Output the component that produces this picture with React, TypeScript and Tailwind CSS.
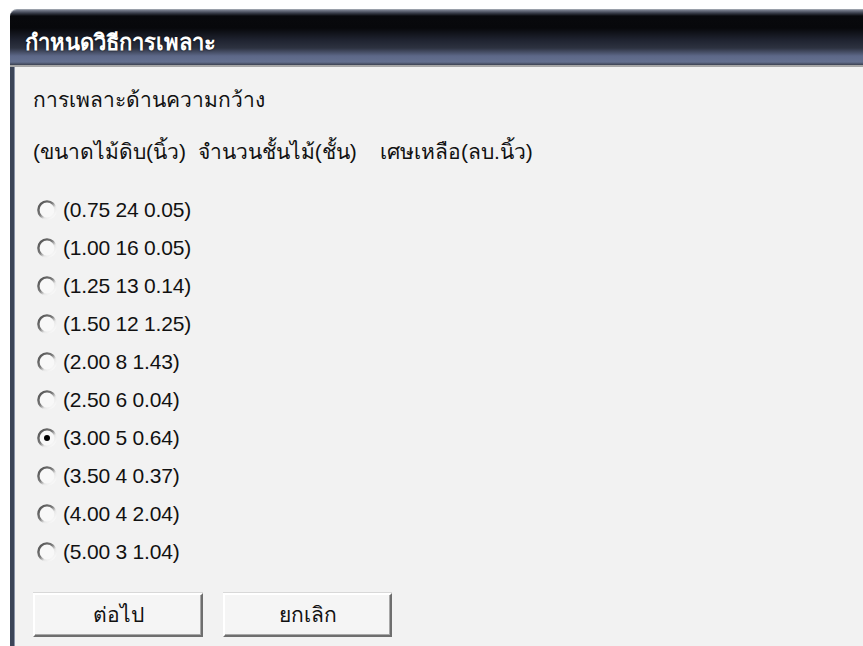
const options = [
  "(0.75 24 0.05)",
  "(1.00 16 0.05)",
  "(1.25 13 0.14)",
  "(1.50 12 1.25)",
  "(2.00 8 1.43)",
  "(2.50 6 0.04)",
  "(3.00 5 0.64)",
  "(3.50 4 0.37)",
  "(4.00 4 2.04)",
  "(5.00 3 1.04)",
];

const Radio = ({ checked }: { checked: boolean }) => (
  <svg width="20" height="20" viewBox="0 0 20 20" className="shrink-0">
    <defs>
      <linearGradient id="ring" x1="0" y1="0" x2="1" y2="1">
        <stop offset="0" stopColor="#4e4e4e" />
        <stop offset="0.45" stopColor="#7a7a7a" />
        <stop offset="0.65" stopColor="#e8e8e8" />
        <stop offset="1" stopColor="#ffffff" />
      </linearGradient>
    </defs>
    <circle cx="10" cy="10" r="8.6" fill="#f8f8f8" stroke="url(#ring)" strokeWidth="2.4" />
    {checked && <circle cx="10" cy="10" r="3" fill="#000" />}
  </svg>
);

const App = () => {
  const selected = 6;
  const font = { fontFamily: "'Liberation Sans', Tahoma, 'Noto Sans', 'DejaVu Sans', sans-serif" };

  return (
    <div className="w-[863px] h-[646px] bg-white overflow-hidden pt-[9px] pl-[10px]" style={font}>
      <div className="w-[900px] h-full flex flex-col">
        {/* caption bar */}
        <div className="h-[56px] rounded-tl-[7px] border-t border-[#9aa0aa] flex items-center pl-[15px] pt-[10px] [background-image:linear-gradient(to_bottom,#7a8090_0px,#3a3f4c_3px,#08090c_6px,#07080b_18px,#1f2330_30px,#2d3240_38px,#5d6888_46px,#64708f_52px,#3b4150_55px)]">
          <span className="text-white font-bold text-[22px] leading-[24px] [text-shadow:0_0_2px_#000]">
            กำหนดวิธีการเพลาะ
          </span>
        </div>
        <div className="h-[2px] bg-[#a6a6a6]" />

        <div className="flex-1 flex border-l-[4px] border-[#3c4558] bg-[#f2f2f2]">
          <div className="w-px bg-[#8a93a6]" />
          <div className="flex-1 flex flex-col pl-[18px] pt-[21px] text-[21px] text-[#111]">
            <div className="leading-[24px]">การเพลาะด้านความกว้าง</div>
            <div className="leading-[24px] mt-[28px] whitespace-pre">
              {"(ขนาดไม้ดิบ(นิ้ว)  จำนวนชั้นไม้(ชั้น)    เศษเหลือ(ลบ.นิ้ว)"}
            </div>

            <div className="mt-[27px] flex flex-col">
              {options.map((opt, i) => (
                <div key={opt} className="h-[38px] flex items-center gap-[6px] pl-[4px]">
                  <Radio checked={i === selected} />
                  <span className="text-[21px] leading-[24px] tracking-[-0.2px]">{opt}</span>
                </div>
              ))}
            </div>

            <div className="mt-[22px] flex gap-[20px]">
              <button className="w-[170px] h-[44px] bg-[#f5f5f5] border-2 border-t-white border-l-white border-r-[#6e6e6e] border-b-[#6e6e6e] shadow-[inset_-1px_-1px_0_#a8a8a8,0_-1px_0_#d8d8d8] text-[21px]">
                ต่อไป
              </button>
              <button className="w-[169px] h-[44px] bg-[#f5f5f5] border-2 border-t-white border-l-white border-r-[#6e6e6e] border-b-[#6e6e6e] shadow-[inset_-1px_-1px_0_#a8a8a8,0_-1px_0_#d8d8d8] text-[21px]">
                ยกเลิก
              </button>
            </div>
          </div>
        </div>
      </div>
    </div>
  );
};

export default App;
